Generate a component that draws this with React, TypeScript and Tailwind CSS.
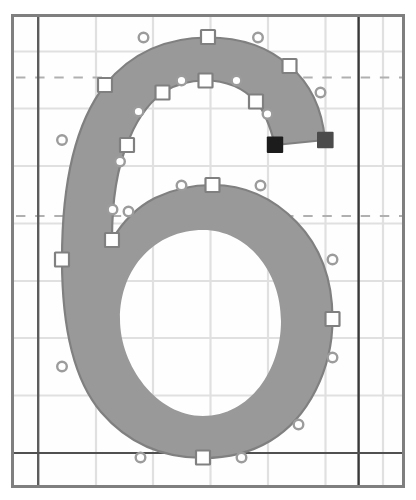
const gridX = [96, 153, 210.5, 268, 325.5, 383];
const gridY = [51.5, 108.5, 166, 223.5, 281, 338, 395.5];
const dashY = [77.5, 216];

const outline =
  'M208 37.5 Q258 37.5 289.5 66 Q320.5 92 325 140 L275 145 Q267 114 256 101.5 Q236.5 80.5 205 80.5 ' +
  'Q181.5 80.5 162.5 92.5 Q138.5 111.5 127 145 Q120 161 116 185 Q112 209 112 240 ' +
  'Q128.5 211.5 155 198 Q181.5 185 212.5 185 Q260.5 185 296.5 222 Q332.5 259 332.5 319 ' +
  'Q332.5 357 315.5 390.5 Q298.5 424 270 441 Q241.5 458 203.5 458 Q140.5 458 101 412 ' +
  'Q62 366 62 259.5 Q62 140 105 85 Q143.5 37.5 208 37.5 Z';

const counter =
  'M120 319 C120 268 155 230 203 230 C247 230 281 271 281 321 C281 370 250 416 203 416 C157 416 120 366 120 319 Z';

const anchors = [
  [208, 37], [289.5, 66], [256, 101.5], [205.5, 80.5], [162.5, 92.5], [127, 145],
  [105, 85], [112, 240], [212.5, 185], [332.5, 319], [203, 457.5], [62, 259.5],
];

const handles = [
  [143.5, 37.5], [258, 37.5], [320.5, 92.5], [267.5, 114], [236.5, 80.5], [181.5, 80.5],
  [138.5, 111.5], [120, 161.5], [112.5, 209.5], [128.5, 211.5], [181.5, 185.5], [260.5, 185.5],
  [332.5, 259.5], [332.5, 357.5], [298.5, 424.5], [241.5, 457.5], [140.5, 457.5],
  [62, 366.5], [62, 140],
];

function GlyphCanvas() {
  return (
    <svg
      viewBox="14 17 388 468"
      className="block h-auto w-full"
      role="img"
      aria-label="Glyph outline of the digit six"
    >
      <g stroke="#e0e0e0" strokeWidth="2.2">
        {gridX.map((x) => (
          <line key={x} x1={x} x2={x} y1="17" y2="485" />
        ))}
        {gridY.map((y) => (
          <line key={y} x1="14" x2="402" y1={y} y2={y} />
        ))}
      </g>
      <g stroke="#b0b0b0" strokeWidth="2" strokeDasharray="9.4 9.75">
        {dashY.map((y) => (
          <line key={y} x1="16" x2="402" y1={y} y2={y} />
        ))}
      </g>
      <line x1="38.2" x2="38.2" y1="17" y2="485" stroke="#5c5c5c" strokeWidth="2.4" />
      <line x1="358.6" x2="358.6" y1="17" y2="485" stroke="#383838" strokeWidth="2.4" />
      <line x1="14" x2="402" y1="453" y2="453" stroke="#505050" strokeWidth="2.2" />

      <path d={`${outline} ${counter}`} fill="#999999" fillRule="evenodd" />
      <path d={outline} fill="none" stroke="#808080" strokeWidth="2.2" strokeLinejoin="round" />

      {handles.map(([x, y]) => (
        <circle key={`${x}-${y}`} cx={x} cy={y} r="4.8" fill="#ffffff" stroke="#9c9c9c" strokeWidth="2.4" />
      ))}
      {anchors.map(([x, y]) => (
        <rect
          key={`${x}-${y}`}
          x={x - 7}
          y={y - 7}
          width="14"
          height="14"
          rx="0.5"
          fill="#ffffff"
          stroke="#808080"
          strokeWidth="2.2"
        />
      ))}
      <rect x="266.8" y="136.5" width="16.4" height="16.4" rx="1" fill="#1c1c1c" />
      <rect x="317" y="131.7" width="16.6" height="16.6" rx="1" fill="#4b4b4b" />
    </svg>
  );
}

export default function App() {
  return (
    <main className="bg-white px-[11px] pt-[14px] pb-3">
      <div className="border-[3px] border-[#7f7f7f] bg-[#fefefe]">
        <GlyphCanvas />
      </div>
    </main>
  );
}
